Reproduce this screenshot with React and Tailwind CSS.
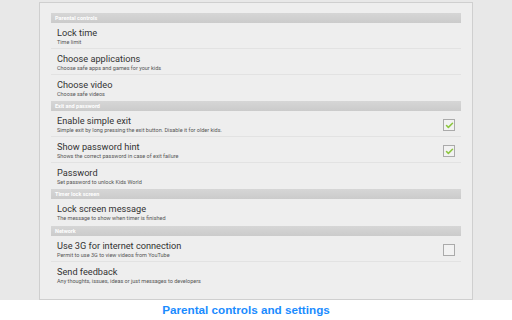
import { Check } from "lucide-react";

const sections = [
  {
    title: "Parental controls",
    rows: [
      { title: "Lock time", sub: "Time limit" },
      { title: "Choose applications", sub: "Choose safe apps and games for your kids" },
      { title: "Choose video", sub: "Choose safe videos" },
    ],
  },
  {
    title: "Exit and password",
    rows: [
      {
        title: "Enable simple exit",
        sub: "Simple exit by long pressing the exit button. Disable it for older kids.",
        check: true,
      },
      {
        title: "Show password hint",
        sub: "Shows the correct password in case of exit failure",
        check: true,
      },
      { title: "Password", sub: "Set password to unlock Kids World" },
    ],
  },
  {
    title: "Timer lock screen",
    rows: [
      { title: "Lock screen message", sub: "The message to show when timer is finished", tall: true },
    ],
  },
  {
    title: "Network",
    rows: [
      {
        title: "Use 3G for internet connection",
        sub: "Permit to use 3G to view videos from YouTube",
        check: false,
      },
      { title: "Send feedback", sub: "Any thoughts, issues, ideas or just messages to developers" },
    ],
  },
];

const Row = ({ row, last }) => (
  <div
    className={`flex items-start pt-[5px] pl-[6px] pr-[6px] ${row.tall ? "h-[27px]" : "h-[26px]"} ${
      last ? "" : "border-b border-[#e2e2e2]"
    }`}
  >
    <div className="flex-1 flex flex-col">
      <span className="text-[9.2px] leading-[10px] text-[#333]">{row.title}</span>
      <span className="text-[5.5px] leading-[8px] text-[#555]">{row.sub}</span>
    </div>
    {row.check !== undefined && (
      <div className="mt-[3px] w-[12px] h-[12px] border border-[#aaa] bg-[#f2f2f2] flex items-center justify-center">
        {row.check && <Check size={9} strokeWidth={4} className="text-[#8cc63f]" />}
      </div>
    )}
  </div>
);

const App = () => {
  return (
    <div className="w-[512px] h-[320px] flex flex-col bg-white overflow-hidden font-['Roboto','Noto_Sans',sans-serif]">
      <div className="h-[300px] bg-[#e8e8e8] pt-[2px] pl-[39px]">
        <div className="w-[434px] h-[298px] bg-[#eeeeee] border border-[#cfcfcf] pt-[10px] pl-[11px] pr-[11px]">
          {sections.map((s) => (
            <div key={s.title}>
              <div className="h-[10px] bg-gradient-to-b from-[#d6d6d6] to-[#cbcbcb] pl-[4px] flex items-center">
                <span className="text-[5.5px] font-bold text-white">{s.title}</span>
              </div>
              {s.rows.map((r, i) => (
                <Row key={r.title} row={r} last={i === s.rows.length - 1} />
              ))}
            </div>
          ))}
        </div>
      </div>
      <div className="h-[20px] flex items-center justify-center pr-[20px]">
        <span className="text-[11.7px] font-bold text-[#1a8cff] font-['Liberation_Sans',Arial,sans-serif]">
          Parental controls and settings
        </span>
      </div>
    </div>
  );
};

export default App;
